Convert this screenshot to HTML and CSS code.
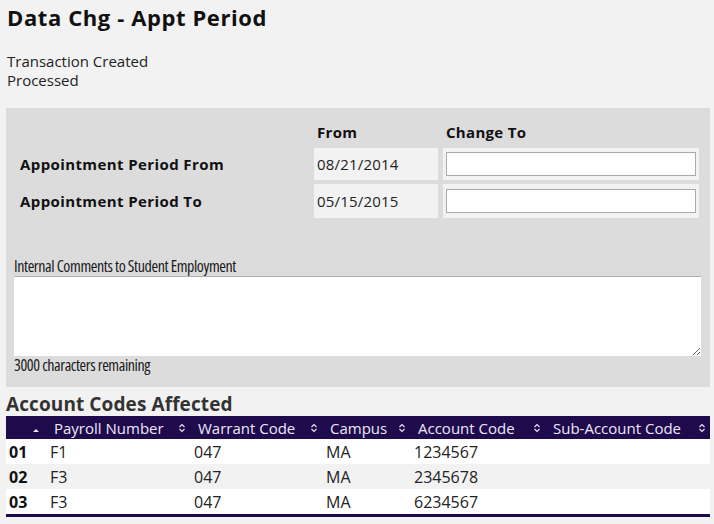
FILE: index.html
```html
<!DOCTYPE html>
<html>
<head>
<meta charset="utf-8">
<link rel="stylesheet" href="styles.css">
</head>
<body>
<div class="page">
  <h1 class="title">Data Chg - Appt Period</h1>
  <div class="status">
    <div>Transaction Created</div>
    <div>Processed</div>
  </div>
  <div class="panel">
    <div class="form-grid">
      <div class="hdr-blank"></div>
      <div class="col-hdr">From</div>
      <div class="col-hdr">Change To</div>

      <div class="row-label">Appointment Period From</div>
      <div class="from-cell">08/21/2014</div>
      <div class="change-cell"><input class="text-input" type="text"></div>

      <div class="row-label">Appointment Period To</div>
      <div class="from-cell">05/15/2015</div>
      <div class="change-cell"><input class="text-input" type="text"></div>
    </div>
    <div class="comments">
      <label class="comments-label">Internal Comments to Student Employment</label>
      <textarea class="comments-box"></textarea>
      <div class="remaining">3000 characters remaining</div>
    </div>
  </div>
  <h2 class="section-title">Account Codes Affected</h2>
  <table class="codes">
    <colgroup>
      <col class="c1"><col class="c2"><col class="c3"><col class="c4"><col class="c5"><col class="c6">
    </colgroup>
    <thead>
      <tr>
        <th><span class="th-text"></span><svg class="sort sort-asc" viewBox="0 0 8 10"><path d="M1 8 L4 5 L7 8 Z" fill="currentColor"/></svg></th>
        <th><span class="th-text">Payroll Number</span><svg class="sort" viewBox="0 0 8 10"><path d="M1.5 4 L4 1.5 L6.5 4 M1.5 6 L4 8.5 L6.5 6" fill="none" stroke="currentColor" stroke-width="1.1"/></svg></th>
        <th><span class="th-text">Warrant Code</span><svg class="sort" viewBox="0 0 8 10"><path d="M1.5 4 L4 1.5 L6.5 4 M1.5 6 L4 8.5 L6.5 6" fill="none" stroke="currentColor" stroke-width="1.1"/></svg></th>
        <th><span class="th-text">Campus</span><svg class="sort" viewBox="0 0 8 10"><path d="M1.5 4 L4 1.5 L6.5 4 M1.5 6 L4 8.5 L6.5 6" fill="none" stroke="currentColor" stroke-width="1.1"/></svg></th>
        <th><span class="th-text">Account Code</span><svg class="sort" viewBox="0 0 8 10"><path d="M1.5 4 L4 1.5 L6.5 4 M1.5 6 L4 8.5 L6.5 6" fill="none" stroke="currentColor" stroke-width="1.1"/></svg></th>
        <th><span class="th-text">Sub-Account Code</span><svg class="sort" viewBox="0 0 8 10"><path d="M1.5 4 L4 1.5 L6.5 4 M1.5 6 L4 8.5 L6.5 6" fill="none" stroke="currentColor" stroke-width="1.1"/></svg></th>
      </tr>
    </thead>
    <tbody>
      <tr><td class="num">01</td><td>F1</td><td>047</td><td>MA</td><td>1234567</td><td></td></tr>
      <tr class="alt"><td class="num">02</td><td>F3</td><td>047</td><td>MA</td><td>2345678</td><td></td></tr>
      <tr><td class="num">03</td><td>F3</td><td>047</td><td>MA</td><td>6234567</td><td></td></tr>
    </tbody>
  </table>
</div>
</body>
</html>
```

FILE: styles.css
```css
html, body {
  margin: 0;
  padding: 0;
  background: #f2f2f2;
}
body {
  font-family: "Open Sans", "Noto Sans", sans-serif;
  color: #1a1a1a;
}
.page {
  padding: 0 4px 0 6px;
}
.title {
  margin: 0;
  padding: 2px 0 0 1px;
  font-size: 22px;
  line-height: 31px;
  font-weight: 700;
  letter-spacing: 0.6px;
  color: #111;
}
.status {
  margin-top: 19px;
  padding-left: 1px;
  font-size: 15px;
  line-height: 19px;
  color: #222;
}
.panel {
  margin-top: 18px;
  background: #dcdcdd;
  padding: 12px 9px 12px 8px;
}
.form-grid {
  display: grid;
  grid-template-columns: 295px 124px 256px;
  grid-template-rows: 24px 32px 34px;
  column-gap: 5px;
  row-gap: 4px;
}
.col-hdr {
  font-weight: 700;
  font-size: 15px;
  letter-spacing: 0.3px;
  padding-left: 3px;
  display: flex;
  align-items: center;
  color: #111;
}
.row-label {
  font-weight: 700;
  font-size: 15px;
  letter-spacing: 0.4px;
  padding-left: 6px;
  display: flex;
  align-items: center;
  color: #111;
}
.from-cell {
  background: #f2f2f2;
  font-size: 15px;
  letter-spacing: 0.2px;
  padding-left: 3px;
  display: flex;
  align-items: center;
  color: #222;
}
.change-cell {
  background: #f2f2f2;
  display: flex;
  align-items: center;
  padding: 0 3px;
}
.text-input {
  box-sizing: border-box;
  width: 100%;
  height: 24px;
  border: 1px solid #a9a9a9;
  background: #fff;
  margin: 0;
  padding: 0 4px;
}
.comments {
  margin-top: 38px;
  display: flex;
  flex-direction: column;
}
.comments-label {
  font-size: 16px;
  line-height: 20px;
  color: #1a1a1a;
  font-stretch: 75%;
  letter-spacing: -0.4px;
}
.comments-box {
  box-sizing: border-box;
  width: 687px;
  height: 80px;
  margin: 0;
  border: none;
  border-top: 1px solid #b0b0b0;
  background: #fff;
  display: block;
}
.remaining {
  font-size: 16px;
  line-height: 19px;
  color: #1a1a1a;
  font-stretch: 75%;
  letter-spacing: -0.4px;
}
.section-title {
  margin: 5px 0 0 0;
  font-size: 19px;
  line-height: 24px;
  font-weight: 700;
  letter-spacing: 0.1px;
  color: #333;
}
.codes {
  width: 704px;
  border-collapse: collapse;
  table-layout: fixed;
  border-bottom: 3px solid #1f0b4c;
}
.c1 { width: 40px; }
.c2 { width: 144px; }
.c3 { width: 132px; }
.c4 { width: 88px; }
.c5 { width: 135px; }
.c6 { width: 165px; }
.codes th {
  background: #1f0b4c;
  color: #ece8f8;
  font-weight: 400;
  font-size: 15px;
  height: 23px;
  padding: 0 4px 0 8px;
  text-align: left;
  white-space: nowrap;
}
.codes th .th-text {
  display: inline-block;
  vertical-align: middle;
}
.codes th .sort {
  float: right;
  width: 8px;
  height: 10px;
  margin-top: 6px;
  color: #ece8f8;
}
.codes th .sort-asc {
  margin-right: 2px;
}
.codes td {
  font-size: 16px;
  height: 25px;
  padding: 0 4px;
  color: #222;
  background: #fff;
}
.codes tr.alt td {
  background: #f2f2f2;
}
.codes td.num {
  font-weight: 700;
  padding-left: 3px;
  color: #111;
}
```
